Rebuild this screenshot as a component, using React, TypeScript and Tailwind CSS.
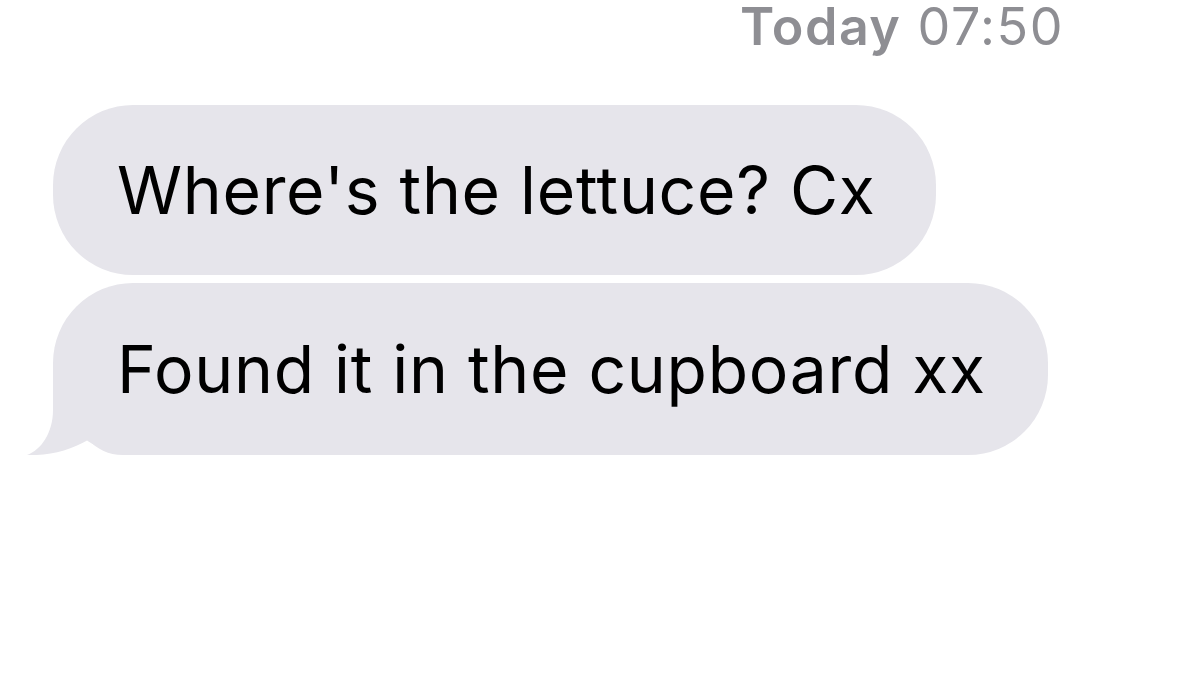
export default function App() {
  return (
    <div className="w-[1200px] h-[675px] bg-white overflow-hidden" style={{ fontFamily: 'Inter, "Liberation Sans", sans-serif' }}>
      <div className="pl-[740px] pt-0 h-[105px] text-[52px] leading-[54px] text-[#8e8e93] tracking-[1.5px]">
        <span className="font-semibold">Today</span> <span>07:50</span>
      </div>
      <div className="flex flex-col items-start gap-[8px] pl-[53px] tracking-[0.7px]">
        <div className="h-[170px] flex items-center pl-[64px] pr-[60px] rounded-[80px] bg-[#e6e5eb] text-[66px] leading-none text-black">
          Where's the lettuce? Cx
        </div>
        <div className="relative h-[172px] flex items-center pl-[64px] pr-[62px] rounded-[80px] bg-[#e6e5eb] text-[66px] leading-none text-black">
          <svg className="absolute left-[-30px] bottom-0 w-[120px] h-[90px]" viewBox="0 0 120 90">
            <path d="M30 0 L30 45 C30 68 18 85 4 90 C26 91 48 85 65 75 C75 84 85 90 100 90 L120 90 L120 0 Z" fill="#e6e5eb" />
          </svg>
          <span className="relative">Found it in the cupboard xx</span>
        </div>
      </div>
    </div>
  )
}
